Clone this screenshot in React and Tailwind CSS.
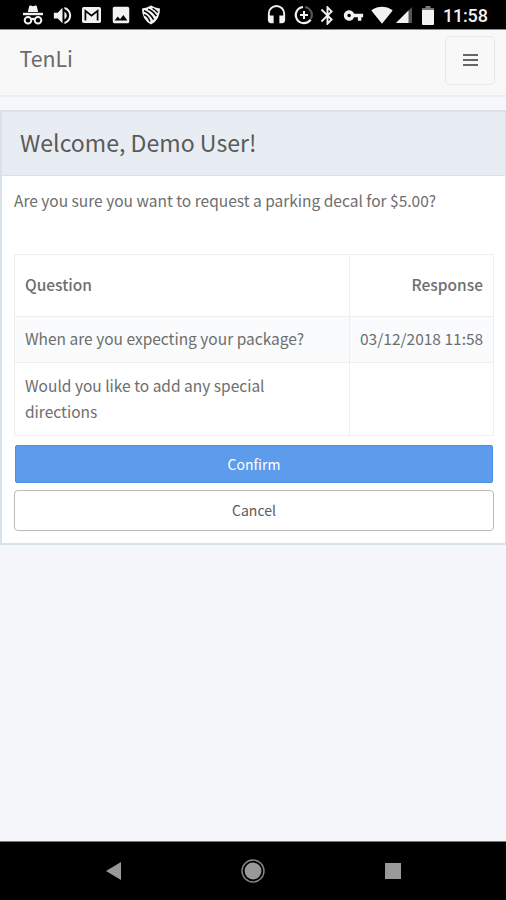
import React from 'react';
import {
  MdVolumeUp,
  MdImage,
  MdHeadset,
  MdBluetooth,
  MdVpnKey,
  MdSignalWifi4Bar,
} from "react-icons/md";

const rows = [
  { question: 'When are you expecting your package?', response: '03/12/2018 11:58' },
  { question: 'Would you like to add any special directions', response: '' },
];

const IncognitoIcon = () => (
  <svg width="20" height="20" viewBox="0 0 20 20" fill="none">
    <path d="M4.8 7 6.2 1.2Q6.5.2 7.5.5L10 1.2 12.5.5Q13.5.2 13.8 1.2L15.2 7Z" fill="#f2f2f2" />
    <path d="M0 7.8H20V10.2H0Z" fill="#f2f2f2" />
    <circle cx="5" cy="15.2" r="3.3" stroke="#f2f2f2" strokeWidth="2" />
    <circle cx="15" cy="15.2" r="3.3" stroke="#f2f2f2" strokeWidth="2" />
    <path d="M8.2 14.5Q10 13 11.8 14.5" stroke="#f2f2f2" strokeWidth="2" />
  </svg>
);

const MailIcon = () => (
  <svg width="19" height="16" viewBox="0 0 19 16">
    <rect width="19" height="16" rx="1.8" fill="#f2f2f2" />
    <path d="M3.4 13.5V3.8L9.5 8.6 15.6 3.8V13.5" fill="none" stroke="#000" strokeWidth="1.7" />
  </svg>
);

const ShieldIcon = () => (
  <svg width="20" height="20" viewBox="0 0 20 20">
    <path d="M1 3.4Q6 3 10 .6 14 3 19 3.4 19.4 14 10 19.6.6 14 1 3.4Z" fill="#f2f2f2" />
    <path d="M3 9.6Q7 11 9 16.6M3 5.8Q9 8 12.6 14.6M7.2 4.2Q12 6 15.4 11.2M11.6 3.4Q14 4.6 16.8 7.6" fill="none" stroke="#000" strokeWidth="1.5" />
  </svg>
);

const DataSaverIcon = () => (
  <svg width="20" height="20" viewBox="0 0 20 20" fill="none">
    <path d="M11 2A8.1 8.1 0 0 1 16.8 14" stroke="#555" strokeWidth="2.2" />
    <path d="M9 2A8.1 8.1 0 1 0 16.6 14.6" stroke="#f2f2f2" strokeWidth="2.2" />
    <path d="M10 6V14M6 10H14" stroke="#f2f2f2" strokeWidth="2" />
  </svg>
);

const SignalIcon = () => (
  <svg width="18" height="18" viewBox="0 0 18 18">
    <path d="M17 1V17H1Z" fill="#555" />
    <path d="M13.5 4.5V17H1Z" fill="#f2f2f2" />
  </svg>
);

const BatteryIcon = () => (
  <svg width="12" height="19" viewBox="0 0 12 19">
    <path d="M3.5 0H8.5V2H12V5H0V2H3.5Z" fill="#777" />
    <path d="M0 4H12V18Q12 19 11 19H1Q0 19 0 18Z" fill="#f2f2f2" />
  </svg>
);

const StatusBar = () => (
  <div className="flex h-[30px] shrink-0 items-center justify-between border-b border-[#8a8a8a] bg-black pt-px pr-[18px] pl-[18px] text-[#f2f2f2]">
    <div className="flex items-center">
      <span className="flex w-[29px] justify-center"><IncognitoIcon /></span>
      <span className="flex w-[30px] justify-center"><MdVolumeUp size={23} /></span>
      <span className="flex w-[29px] justify-center"><MailIcon /></span>
      <span className="flex w-[30px] justify-center"><MdImage size={22} /></span>
      <span className="flex w-[29px] justify-center"><ShieldIcon /></span>
    </div>
    <div className="flex items-center">
      <span className="flex w-[27px] justify-center"><MdHeadset size={23} /></span>
      <span className="flex w-[28px] justify-center"><DataSaverIcon /></span>
      <span className="flex w-[19px] justify-center"><MdBluetooth size={23} className="shrink-0" /></span>
      <span className="flex w-[32px] justify-center"><MdVpnKey size={21} /></span>
      <span className="flex w-[26px] justify-center"><MdSignalWifi4Bar size={22} /></span>
      <span className="flex w-[18px] justify-center"><SignalIcon /></span>
      <span className="flex w-[30px] justify-center"><BatteryIcon /></span>
      <span className="w-[45px] pt-px whitespace-nowrap font-['Roboto',sans-serif] text-[18px] leading-none font-medium tracking-[-0.2px]">11:58</span>
    </div>
  </div>
);

const Navbar = () => (
  <div className="flex h-[67px] shrink-0 items-start justify-between border-b-2 border-[#ebeef1] bg-[#f8f8f8] pr-[11px] pl-[19.5px]">
    <span className="mt-[12px] text-[21.3px] leading-8 text-[#6b6b6b]">TenLi</span>
    <button aria-label="Toggle navigation" className="mt-[6px] flex h-[49px] w-[50px] flex-col items-center justify-center gap-[3px] rounded-[5px] border-[1.5px] border-[#e7e7e7] pb-[2px]">
      <span className="h-[2px] w-[15px] bg-[#666]" />
      <span className="h-[2px] w-[15px] bg-[#666]" />
      <span className="h-[2px] w-[15px] bg-[#666]" />
    </button>
  </div>
);

const NavigationBar = () => (
  <div className="flex h-[59px] shrink-0 items-center justify-between border-t border-[#777] bg-black pr-[105px] pl-[106px]">
    <svg width="15" height="18" viewBox="0 0 15 18"><path d="M0 9 15 0V18Z" fill="#999" /></svg>
    <svg width="24" height="24" viewBox="0 0 24 24">
      <circle cx="12" cy="12" r="11" fill="none" stroke="#888" strokeWidth="1.4" />
      <circle cx="12" cy="12" r="8.4" fill="#999" />
    </svg>
    <span className="h-4 w-4 bg-[#999]" />
  </div>
);

const App = () => {
  return (
    <div className="flex h-[900px] w-[506px] flex-col overflow-hidden bg-[#f5f7fa] font-['Noto_Sans_CJK_JP',sans-serif] text-[#6e6e6e]">
      <StatusBar />
      <Navbar />

      <main className="flex-1 pt-[13px]">
        <section className="h-[435px] border-2 border-r-[1px] border-[#d8e2ea] bg-white">
          <h1 className="h-[64px] border-b-[1.5px] border-[#d8e2ea] bg-[#e8edf4] pl-[18px] text-[23.1px] leading-[61px] text-[#5a5a5a]">
            Welcome, Demo User!
          </h1>

          <div className="pr-[11px] pl-3">
            <p className="mt-[11px] text-[15.5px] leading-[26px]">
              Are you sure you want to request a parking decal for $5.00?
            </p>

            <table className="mt-[41px] w-full table-fixed border-collapse text-[15.5px] leading-[26px]">
              <thead>
                <tr className="h-[62px]">
                  <th className="w-[335px] border border-[#eee] px-[10px] pb-[3px] text-left font-medium">Question</th>
                  <th className="border border-[#eee] px-[10px] pb-[3px] text-right font-medium">Response</th>
                </tr>
              </thead>
              <tbody>
                {rows.map((row, index) => (
                  <tr key={index} className={index === 0 ? 'h-[46px] bg-[#f9fbfc]' : 'h-[73px]'}>
                    <td className="border border-[#eee] pr-5 pb-[3px] pl-[10px]">{row.question}</td>
                    <td className="border border-[#eee] px-[10px] pb-[3px] text-right whitespace-nowrap">{row.response}</td>
                  </tr>
                ))}
              </tbody>
            </table>

            <div className="px-px">
              <button className="mt-[9px] block h-[38px] w-full rounded-[2px] border border-[#4a90e6] bg-[#5d9cec] text-[14px] text-white">
                Confirm
              </button>
            </div>
            <button className="mt-[7px] block h-[41px] w-full rounded-[4px] border-[1.5px] border-[#bbb] bg-white text-[14px] text-[#5a5a5a]">
              Cancel
            </button>
          </div>
        </section>
      </main>

      <NavigationBar />
    </div>
  );
};

export default App;
